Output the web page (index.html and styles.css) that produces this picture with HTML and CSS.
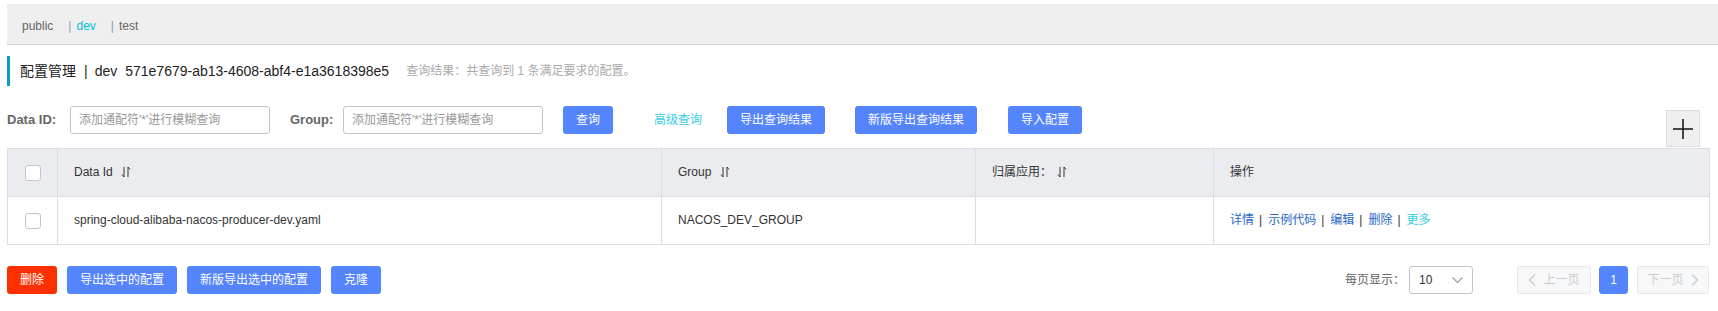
FILE: index.html
```html
<!DOCTYPE html>
<html lang="zh-CN">
<head>
  <meta charset="UTF-8">
  <meta name="viewport" content="width=device-width, initial-scale=1.0">
  <title>配置管理</title>
  <link rel="stylesheet" href="styles.css">
</head>
<body>
  <!-- namespace switch -->
  <div class="ns-bar">
    <span class="ns-item">public</span>
    <span class="ns-sep">|</span><span class="ns-item ns-active">dev</span>
    <span class="ns-sep">|</span><span class="ns-item">test</span>
  </div>

  <div class="title">
    <span>配置管理</span>
    <span class="title-sep">|</span>
    <span>dev</span>
    <span class="title-id">571e7679-ab13-4608-abf4-e1a3618398e5</span>
    <span class="title-result">查询结果：共查询到 1 条满足要求的配置。</span>
  </div>

  <div class="toolbar">
    <div class="search">
      <label class="label label-id">Data ID:</label>
      <input class="input" type="text" placeholder="添加通配符'*'进行模糊查询">
      <label class="label label-group">Group:</label>
      <input class="input" type="text" placeholder="添加通配符'*'进行模糊查询">
      <button class="btn btn-query">查询</button>
      <a class="link-adv" href="#">高级查询</a>
      <button class="btn btn-export">导出查询结果</button>
      <button class="btn btn-export-new">新版导出查询结果</button>
      <button class="btn">导入配置</button>
    </div>
    <div class="plus">
      <svg width="22" height="22" viewBox="0 0 22 22"><path d="M1 11h20M11 1v20" stroke="#111" stroke-width="1.5" fill="none"/></svg>
    </div>
  </div>

  <table class="table">
    <colgroup>
      <col style="width: 50px">
      <col style="width: 604px">
      <col style="width: 314px">
      <col style="width: 238px">
      <col>
    </colgroup>
    <thead>
      <tr>
        <th class="cell-check"><span class="checkbox"></span></th>
        <th>Data Id <svg class="sort" width="10" height="12" viewBox="0 0 10 12"><path d="M3 1v10L1 8.5M7 11V1l2 2.5" fill="none" stroke="#333"/></svg></th>
        <th>Group <svg class="sort" width="10" height="12" viewBox="0 0 10 12"><path d="M3 1v10L1 8.5M7 11V1l2 2.5" fill="none" stroke="#333"/></svg></th>
        <th>归属应用：<svg class="sort" width="10" height="12" viewBox="0 0 10 12"><path d="M3 1v10L1 8.5M7 11V1l2 2.5" fill="none" stroke="#333"/></svg></th>
        <th>操作</th>
      </tr>
    </thead>
    <tbody>
      <tr>
        <td class="cell-check"><span class="checkbox"></span></td>
        <td>spring-cloud-alibaba-nacos-producer-dev.yaml</td>
        <td>NACOS_DEV_GROUP</td>
        <td></td>
        <td>
          <a class="op" href="#">详情</a><span class="op-sep">|</span><a class="op" href="#">示例代码</a><span class="op-sep">|</span><a class="op" href="#">编辑</a><span class="op-sep">|</span><a class="op" href="#">删除</a><span class="op-sep">|</span><a class="op op-more" href="#">更多</a>
        </td>
      </tr>
    </tbody>
  </table>

  <div class="footer">
    <div class="actions">
      <button class="btn btn-danger">删除</button>
      <button class="btn">导出选中的配置</button>
      <button class="btn">新版导出选中的配置</button>
      <button class="btn">克隆</button>
    </div>
    <div class="pager">
      <span class="pager-label">每页显示：</span>
      <div class="select">
        <span>10</span>
        <svg width="11" height="7" viewBox="0 0 11 7"><path d="M0.5 0.5l5 5 5-5" fill="none" stroke="#999" stroke-width="1.2"/></svg>
      </div>
      <div class="page-btn page-prev">
        <svg width="8" height="12" viewBox="0 0 8 12"><path d="M7 0.5L1.5 6 7 11.5" fill="none" stroke="#ccc" stroke-width="1.3"/></svg>
        <span>上一页</span>
      </div>
      <div class="page-btn page-current">1</div>
      <div class="page-btn page-next">
        <span>下一页</span>
        <svg width="8" height="12" viewBox="0 0 8 12"><path d="M1 0.5L6.5 6 1 11.5" fill="none" stroke="#ccc" stroke-width="1.3"/></svg>
      </div>
    </div>
  </div>
</body>
</html>
```

FILE: styles.css
```css
body {
  margin: 0;
  background-color: #fff;
  color: #333;
  font-family: "Liberation Sans", "Noto Sans CJK SC", sans-serif;
  font-size: 12px;
  line-height: 1.2;
}

a {
  text-decoration: none;
}

/* namespace bar */
.ns-bar {
  display: flex;
  align-items: center;
  height: 41px;
  box-sizing: border-box;
  margin: 4px 0 0 7px;
  padding: 4px 0 0 15px;
  background-color: #efefef;
  border-bottom: 1px solid #d6d6d6;
  color: #666;
}

.ns-item {
  margin-right: 15px;
}

.ns-sep {
  margin-right: 5px;
  color: #8d9bb0;
}

.ns-active {
  color: #00c1de;
}

/* page title */
.title {
  display: flex;
  align-items: center;
  height: 30px;
  margin: 11px 0 0 7px;
  padding-left: 10px;
  border-left: 3px solid #0a9ad2;
  font-size: 14px;
  color: #222;
}

.title-sep {
  margin: 0 7px 0 8px;
}

.title-id {
  margin-left: 8px;
}

.title-result {
  margin-left: 17px;
  font-size: 12px;
  color: #aaa;
}

/* search toolbar */
.toolbar {
  display: flex;
  justify-content: space-between;
  align-items: flex-end;
  margin: 20px 8px 0 7px;
}

.search {
  display: flex;
  align-items: center;
  height: 28px;
  margin-bottom: 14px;
}

.label {
  font-size: 13px;
  font-weight: bold;
  color: #666;
}

.label-id {
  width: 63px;
}

.label-group {
  width: 53px;
  margin-left: 20px;
}

.input {
  width: 200px;
  height: 28px;
  box-sizing: border-box;
  padding: 0 8px;
  border: 1px solid #c4c6cf;
  border-radius: 3px;
  font-family: inherit;
  font-size: 12px;
  color: #333;
  outline: none;
}

.input::placeholder {
  color: #999;
}

.btn {
  height: 28px;
  box-sizing: border-box;
  padding: 0 12px;
  border: 1px solid transparent;
  border-radius: 3px;
  background-color: #5584ff;
  color: #fff;
  font-family: inherit;
  font-size: 12px;
  line-height: 26px;
  cursor: pointer;
}

.btn-query {
  margin-left: 20px;
}

.link-adv {
  margin: 0 25px 0 41px;
  color: #33cde5;
}

.btn-export {
  margin-right: 30px;
}

.btn-export-new {
  margin-right: 31px;
}

.plus {
  display: flex;
  align-items: center;
  justify-content: center;
  width: 34px;
  height: 37px;
  box-sizing: border-box;
  margin: 0 10px 1px 0;
  background-color: #efefef;
  border: 1px solid #ddd;
}

/* table */
.table {
  width: calc(100% - 15px);
  margin: 0 8px 0 7px;
  border-collapse: collapse;
  table-layout: fixed;
}

.table th,
.table td {
  height: 47px;
  padding: 0 16px;
  border: 1px solid #dcdee3;
  text-align: left;
  font-weight: normal;
  color: #333;
}

.table th {
  background-color: #ebecf0;
}

.table .cell-check {
  padding: 0;
  text-align: center;
}

.checkbox {
  display: inline-block;
  width: 16px;
  height: 16px;
  box-sizing: border-box;
  border: 1px solid #c4c6cf;
  border-radius: 3px;
  background-color: #fff;
  vertical-align: middle;
}

.sort {
  margin-left: 5px;
  vertical-align: -2px;
}

.op {
  color: #2a66c9;
}

.op-more {
  color: #33cde5;
}

.op-sep {
  margin: 0 6px 0 5px;
  color: #333;
}

/* footer */
.footer {
  display: flex;
  justify-content: space-between;
  align-items: center;
  margin: 21px 9px 0 7px;
}

.actions {
  display: flex;
  gap: 10px;
}

.btn-danger {
  background-color: #ff3000;
}

.pager {
  display: flex;
  align-items: center;
}

.pager-label {
  margin-right: 4px;
  color: #666;
}

.select {
  display: flex;
  align-items: center;
  justify-content: space-between;
  width: 64px;
  height: 28px;
  box-sizing: border-box;
  margin-right: 44px;
  padding: 0 9px 0 9px;
  border: 1px solid #c4c6cf;
  border-radius: 3px;
  color: #333;
}

.page-btn {
  display: flex;
  align-items: center;
  justify-content: center;
  gap: 7px;
  height: 28px;
  box-sizing: border-box;
  border: 1px solid #e6e7eb;
  border-radius: 3px;
  background-color: #f7f8fa;
  color: #ccc;
}

.page-prev {
  width: 74px;
}

.page-next {
  width: 72px;
}

.page-current {
  width: 29px;
  margin: 0 9px 0 8px;
  border-color: #5584ff;
  background-color: #5584ff;
  color: #fff;
}
```
